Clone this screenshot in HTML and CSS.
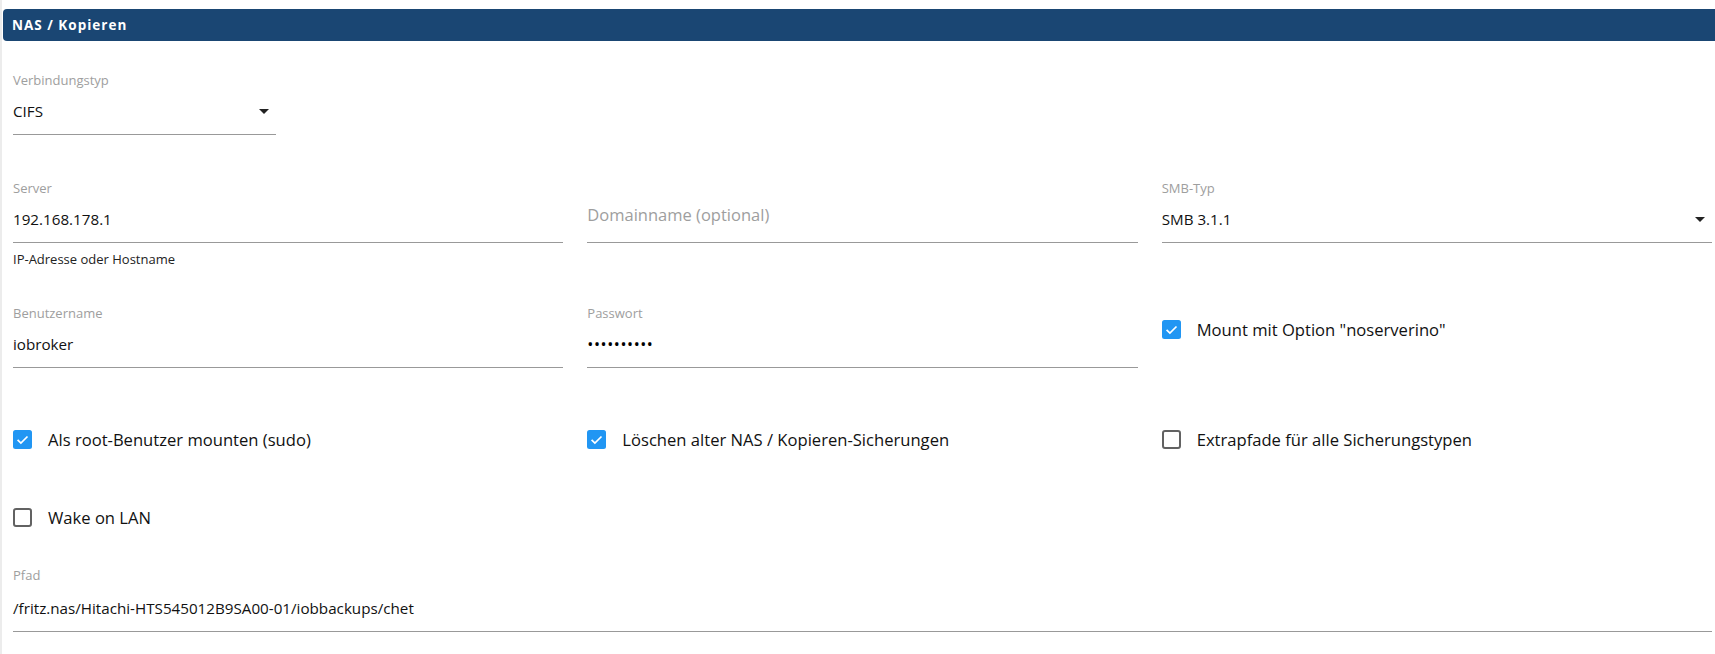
FILE: index.html
```html
<!DOCTYPE html>
<html lang="de">
<head>
<meta charset="utf-8">
<title>NAS / Kopieren</title>
<link rel="stylesheet" href="styles.css">
</head>
<body>
<div class="page">
  <div class="header">NAS / Kopieren</div>
  <div class="form">
    <div class="row row-conn">
      <div class="field field-narrow">
        <div class="label">Verbindungstyp</div>
        <div class="control">
          <span class="value">CIFS</span>
          <svg class="arrow" viewBox="0 0 10 5" width="10" height="5"><path d="M0 0l5 5 5-5z"/></svg>
        </div>
      </div>
    </div>

    <div class="row grid3 row-server">
      <div class="cell">
        <div class="field">
          <div class="label">Server</div>
          <div class="control"><span class="value">192.168.178.1</span></div>
        </div>
        <div class="helper">IP-Adresse oder Hostname</div>
      </div>
      <div class="cell">
        <div class="field">
          <div class="label"></div>
          <div class="control"><span class="placeholder">Domainname (optional)</span></div>
        </div>
      </div>
      <div class="cell">
        <div class="field">
          <div class="label">SMB-Typ</div>
          <div class="control">
            <span class="value">SMB 3.1.1</span>
            <svg class="arrow" viewBox="0 0 10 5" width="10" height="5"><path d="M0 0l5 5 5-5z"/></svg>
          </div>
        </div>
      </div>
    </div>

    <div class="row grid3 row-user">
      <div class="cell">
        <div class="field">
          <div class="label">Benutzername</div>
          <div class="control"><span class="value">iobroker</span></div>
        </div>
      </div>
      <div class="cell">
        <div class="field">
          <div class="label">Passwort</div>
          <div class="control"><span class="value dots">••••••••••</span></div>
        </div>
      </div>
      <div class="cell cell-mount">
        <label class="check">
          <svg class="box" viewBox="0 0 19 19" width="19" height="19"><rect x="0" y="0" width="19" height="19" rx="2.5" class="box-on"/><path d="M4.6 9.8l3.3 3.3 6.6-6.6" class="tick"/></svg>
          <span class="check-text">Mount mit Option "noserverino"</span>
        </label>
      </div>
    </div>

    <div class="row grid3 row-checks">
      <label class="check">
        <svg class="box" viewBox="0 0 19 19" width="19" height="19"><rect x="0" y="0" width="19" height="19" rx="2.5" class="box-on"/><path d="M4.6 9.8l3.3 3.3 6.6-6.6" class="tick"/></svg>
        <span class="check-text">Als root-Benutzer mounten (sudo)</span>
      </label>
      <label class="check">
        <svg class="box" viewBox="0 0 19 19" width="19" height="19"><rect x="0" y="0" width="19" height="19" rx="2.5" class="box-on"/><path d="M4.6 9.8l3.3 3.3 6.6-6.6" class="tick"/></svg>
        <span class="check-text">Löschen alter NAS / Kopieren-Sicherungen</span>
      </label>
      <label class="check">
        <svg class="box" viewBox="0 0 19 19" width="19" height="19"><rect x="1" y="1" width="17" height="17" rx="2" class="box-off"/></svg>
        <span class="check-text">Extrapfade für alle Sicherungstypen</span>
      </label>
    </div>

    <div class="row grid3 row-wol">
      <label class="check">
        <svg class="box" viewBox="0 0 19 19" width="19" height="19"><rect x="1" y="1" width="17" height="17" rx="2" class="box-off"/></svg>
        <span class="check-text">Wake on LAN</span>
      </label>
    </div>

    <div class="row row-path">
      <div class="field">
        <div class="label">Pfad</div>
        <div class="control"><span class="value">/fritz.nas/Hitachi-HTS545012B9SA00-01/iobbackups/chet</span></div>
      </div>
    </div>
  </div>
</div>
</body>
</html>
```

FILE: styles.css
```css
* { box-sizing: border-box; }

html, body {
  margin: 0;
  padding: 0;
  background: #ffffff;
}

body {
  font-family: "Open Sans", "Noto Sans", "DejaVu Sans", sans-serif;
  color: #111;
  overflow: hidden;
}

.page {
  min-height: 654px;
  border-left: 2px solid #ececec;
  padding-top: 9px;
}

.header {
  margin-left: 1px;
  height: 32px;
  background: #1a4673;
  border-radius: 4px 0 0 4px;
  color: #ffffff;
  font-weight: 700;
  font-size: 13.5px;
  letter-spacing: 1px;
  display: flex;
  align-items: center;
  padding-left: 9px;
}

.form {
  padding: 0 3px 0 11px;
}

.grid3 {
  display: grid;
  grid-template-columns: repeat(3, 1fr);
  column-gap: 24px;
}

.row-conn { margin-top: 31px; }
.row-server { margin-top: 45px; }
.row-user { margin-top: 38px; }
.row-checks { margin-top: 59px; }
.row-wol { margin-top: 54px; }
.row-path { margin-top: 38px; }

.field-narrow { width: 263px; }

.label {
  height: 16px;
  line-height: 16px;
  font-size: 13px;
  color: #9e9e9e;
}

.control {
  margin-top: 8px;
  height: 39px;
  padding-bottom: 8px;
  border-bottom: 1px solid #999999;
  display: flex;
  align-items: center;
  justify-content: space-between;
}

.row-path .control {
  margin-top: 10px;
}

.value {
  font-size: 15.2px;
  line-height: 30px;
  color: #111;
  white-space: nowrap;
}

.dots {
  font-size: 16px;
  letter-spacing: 0.6px;
  color: #000;
}

.placeholder {
  font-size: 16.5px;
  line-height: 30px;
  color: #9e9e9e;
  margin-top: -9px;
}

.arrow {
  fill: #222;
  margin-right: 7px;
}

.helper {
  margin-top: 8px;
  font-size: 13px;
  line-height: 16px;
  color: #222;
}

.cell-mount {
  padding-top: 12px;
}

.check {
  display: flex;
  align-items: center;
  height: 24px;
}

.box {
  flex: none;
}

.box-on { fill: #2196f3; }
.tick { fill: none; stroke: #ffffff; stroke-width: 1.7; }
.box-off { fill: none; stroke: #626262; stroke-width: 2; }

.check-text {
  margin-left: 16px;
  font-size: 16.6px;
  color: #111;
  white-space: nowrap;
}
```
